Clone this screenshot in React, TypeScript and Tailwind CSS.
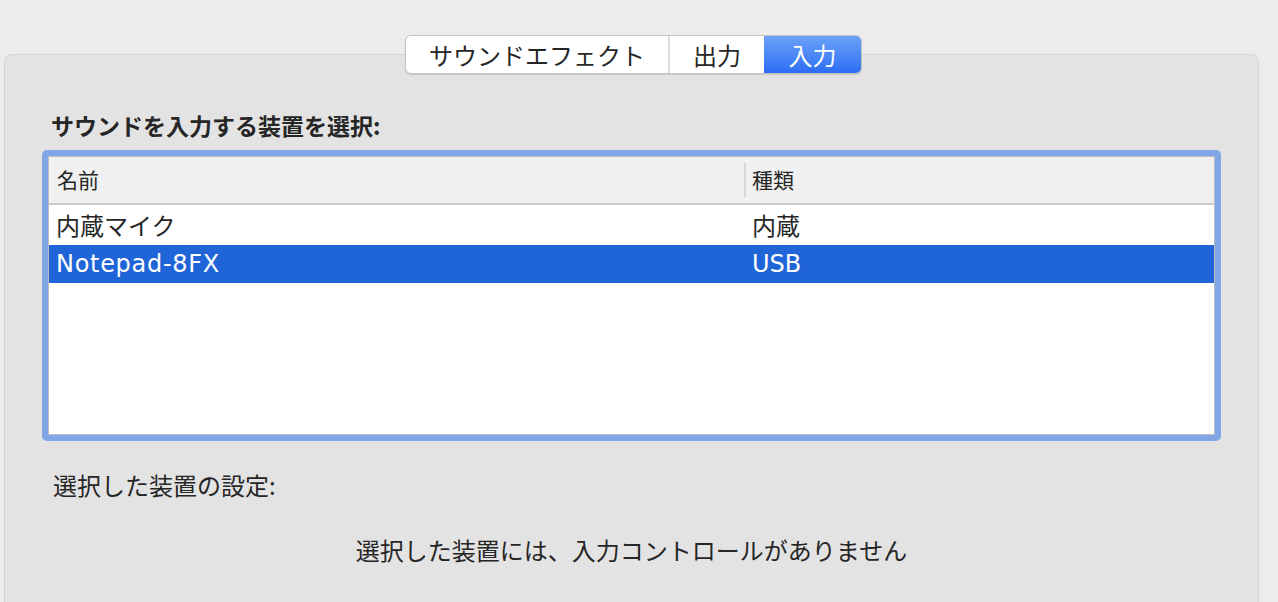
import React from "react";

const font = "font-['Hiragino_Sans','Noto_Sans_CJK_JP',sans-serif]";
const latin = "font-['DejaVu_Sans','Noto_Sans_CJK_JP',sans-serif]";

const tabs = [
  { label: "サウンドエフェクト", w: "w-[264px]", active: false, sep: true },
  { label: "出力", w: "w-[94px]", active: false, sep: false },
  { label: "入力", w: "w-[97px]", active: true, sep: false },
];

const rows = [
  { name: "内蔵マイク", kind: "内蔵", selected: false, h: "h-[40px]" },
  { name: "Notepad-8FX", kind: "USB", selected: true, h: "h-[38px]" },
];

function Segmented() {
  return (
    <div className="flex h-[39px] overflow-hidden rounded-[6px] border border-[#c4c4c4] bg-white shadow-[0_1px_1px_rgba(0,0,0,0.12)]">
      {tabs.map((t) => (
        <div
          key={t.label}
          className={
            t.active
              ? `${t.w} flex items-center justify-center bg-gradient-to-b from-[#6ca2f9] to-[#2d6cf3] text-[24px] text-white`
              : `${t.w} flex items-center justify-center text-[24px] text-[#262626] ${t.sep ? "border-r-2 border-[#dcdcdc]" : ""}`
          }
        >
          {t.label}
        </div>
      ))}
    </div>
  );
}

function DeviceTable() {
  return (
    <div className="rounded-[5px] bg-[#80a6e6] p-[6px]">
      <div className="flex h-[279px] flex-col border border-[#bdbdbd] bg-white">
        <div className="flex h-[48px] shrink-0 items-center border-b-2 border-[#c9c9c9] bg-[#f0f0f0] text-[21px] text-[#262626]">
          <div className="w-[695px] pl-[8px]">名前</div>
          <div className="h-[34px] w-[2px] bg-[#d6d6d6]" />
          <div className="pl-[6px]">種類</div>
        </div>
        {rows.map((r) => (
          <div
            key={r.name}
            className={`flex ${r.h} items-center text-[24px] ${
              r.selected ? `bg-[#1f65d8] text-white ${latin}` : "text-[#262626]"
            }`}
          >
            <div className={`w-[697px] pl-[7px] ${r.selected ? "tracking-[0.7px]" : ""}`}>{r.name}</div>
            <div className="pl-[6px]">{r.kind}</div>
          </div>
        ))}
      </div>
    </div>
  );
}

export default function App() {
  return (
    <div className={`h-[602px] w-[1278px] overflow-hidden bg-[#ececec] pl-[4px] pr-[19px] pt-[35px] ${font}`}>
      <div className="relative z-10 flex justify-center pl-[4px]">
        <Segmented />
      </div>
      <div className="-mt-[20px] h-[600px] rounded-t-[8px] border border-[#d4d4d4] bg-[#e3e3e3] px-[37px] pt-[55px]">
        <div className="pl-[9px] text-[23px] font-bold leading-[30px] text-[#262626]">
          サウンドを入力する装置を選択:
        </div>
        <div className="mt-[10px]">
          <DeviceTable />
        </div>
        <div className="mt-[29px] pl-[11px] text-[24px] leading-[30px] text-[#262626]">
          選択した装置の設定:
        </div>
        <div className="mt-[35px] text-center text-[24px] leading-[30px] text-[#262626]">
          選択した装置には、入力コントロールがありません
        </div>
      </div>
    </div>
  );
}
